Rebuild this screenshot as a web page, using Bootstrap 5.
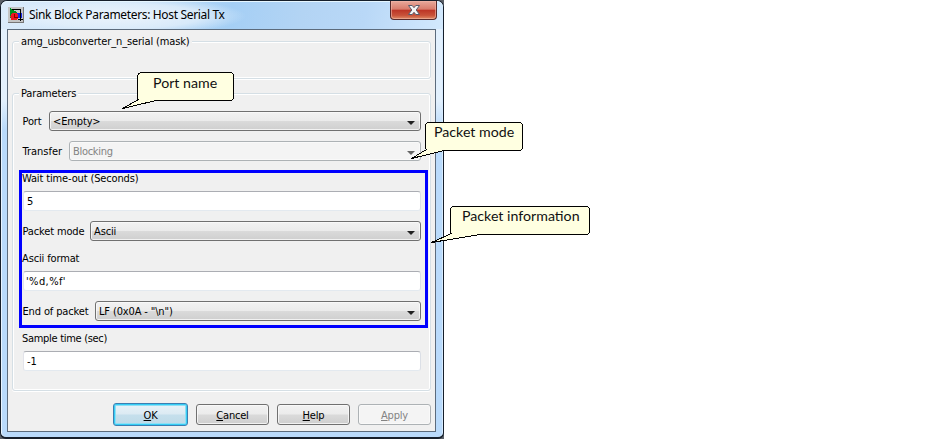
<!DOCTYPE html>
<html lang="en">
<head>
<meta charset="utf-8">
<meta name="viewport" content="width=device-width, initial-scale=1">
<title>Sink Block Parameters: Host Serial Tx</title>
<link href="https://cdn.jsdelivr.net/npm/bootstrap@5.3.0/dist/css/bootstrap.min.css" rel="stylesheet">
<style>
body{width:950px;height:439px;overflow:hidden;background:#fff;color:#000;font:11px/14px "DejaVu Sans Condensed","DejaVu Sans",sans-serif;letter-spacing:-.14px}
.stage{background:#5b6068;width:444px;height:439px}
.window{width:444px;height:439px;padding:0 7px 6px 6px;border:solid #161f2b;border-width:1px 1px 2px 1px;border-radius:7px 7px 6px 6px;background:linear-gradient(#e4f2ff00 0,#e4f2ff00 100px,#b9dafb 129px),#e2f0fd;box-shadow:inset 1px 0 #e8f4ff,inset -1px 0 #d7ebff}
.titlebar{height:28px;margin:0 -7px 0 -6px;padding-left:7px;border-radius:6px 6px 0 0;background:radial-gradient(ellipse 125px 19px at 120px 15px,#eef5fcee 0,#e6f1fbbb 65%,#e6f1fb00 100%),linear-gradient(100deg,#dcecfb 0,#c3dff8 25%,#a5cff5 52%,#b3d4f4 68%,#b9d8f7 82%,#d3e9fd 100%);box-shadow:inset 0 1px #e6f6ff}
.titlebar h1{font:12px/16px "Noto Sans","Open Sans",sans-serif;letter-spacing:-.34px;margin:6px 0 0 5px}
.app-icon{margin-top:6px}
.close-btn{width:47px;height:19px;margin-right:6px;border:1px solid #572a2b;border-top:0;border-radius:0 0 4px 4px;background:linear-gradient(#e8a99b 0,#d87b6b 46%,#bc3425 50%,#c9533a 80%,#e08c66 100%);box-shadow:inset 0 0 0 1px #f2b7a999;padding:0}
.client{height:403px;border:1px solid #5c6b7c;background:#f0f0f0;padding:11px 4px 0 4px}
.group-box{border:1px solid #d5dfe5;border-radius:3px;box-shadow:inset 0 0 0 1px #fff,0 1px #fff}
.mask-box{height:38px;margin-bottom:14px}
.param-box{height:298px;padding:0 9px}
.caption{white-space:pre;height:14px;line-height:16px}
.caption.tight{letter-spacing:-.3px}
.group-title{width:max-content;background:#f0f0f0;padding:0 2px;margin:-8px 0 0 6px}
.param-box .group-title{margin:-8px 0 11px -3px}
.field-row{height:20px;margin-bottom:10px}
.field-row>label{flex:none;white-space:pre;line-height:16px;height:14px;padding-left:.5px}
.w-port{width:27px}.w-transfer{width:47px;letter-spacing:0}.w-mode{width:68px}.w-end{width:73px}
.combo,.entry{height:20px;border-radius:3px;line-height:20px;white-space:pre}
.combo{border:1px solid #707070;background:linear-gradient(#f2f2f2 0,#ebebeb 48%,#dadada 52%,#cfcfcf 100%);box-shadow:inset 0 0 0 1px #fafafacc;padding:0 5px 0 3px}
.combo>span{height:18px}
.combo.off{border-color:#adb2b5;background:#f4f4f4;color:#838383;letter-spacing:-.3px}
.combo svg{margin-top:4px;fill:#222}
.combo.off svg{fill:#666}
.entry{border:1px solid;border-color:#abadb3 #dbdfe6 #e3e9ef #e2e3ea;background:#fff;padding:0 3px;margin:6px 0 10px 1px;width:398px}
.entry.format{letter-spacing:.4px;padding-left:2px}
.packet-info{border:3px solid #00f;width:409px;height:158px;margin:-1px 0 3px -3px;padding:0 4px 0 0;display:flow-root}
.packet-info>.caption:first-child{margin-top:-2px}
.cmd{height:21px;width:73px;border:1px solid #707070;border-radius:3px;letter-spacing:-.2px;line-height:18px;padding:2px 0 0;color:#000;background:linear-gradient(#f2f2f2 0,#ebebeb 48%,#dadada 52%,#cfcfcf 100%);box-shadow:inset 0 0 0 1px #fafafacc}
.cmd.main{width:75px;height:23px;border-color:#3c7fb1;background:linear-gradient(#e9f3f8 0,#dbeaf3 48%,#c5dfec 52%,#bfdae8 100%);box-shadow:inset 0 0 0 1px #35cdf5,inset 0 0 0 2px #8fdff5}
.cmd.off{border-color:#adb2b5;background:#f4f4f4;color:#838383}
.cmd-bar{gap:8px;margin-top:12px}
.callout-note{position:absolute}
.callout-note path{fill:#ffffe1;stroke:#000}
.callout-note span{position:absolute;top:4px;left:33px;white-space:pre;font:14.2px/18px Lato,sans-serif;letter-spacing:0;color:#111}
.note-port{left:120px;top:70px}
.note-mode{left:408px;top:120px}
.note-mode span{left:26px;top:3px}
.note-info{left:429px;top:204px}
.note-info span{top:3px}
</style>
</head>
<body class="position-relative">
<div class="stage">
<main class="window">
  <header class="titlebar d-flex align-items-start">
    <svg class="app-icon" width="16" height="16" viewBox="0 0 16 16" aria-hidden="true" shape-rendering="crispEdges">
      <path fill="#c5c5c5" d="M0 0h16v16H0z"/><path fill="none" stroke="#777" d="M0 15.500h15.500V0"/>
      <path fill="#008f20" d="M2 1l8 5-8 5z"/><path fill="#1526ee" d="M8 6h6v5H8z"/>
      <path fill="none" stroke="#000" d="M4 2.500h8.500V14M10 12.500h5"/>
      <circle cx="6.500" cy="9.500" r="4" fill="#f01420"/><path stroke="#800" d="M6.500 7v3h3" fill="none"/>
    </svg>
    <h1 class="text-nowrap">Sink Block Parameters: Host Serial Tx</h1>
    <button class="close-btn ms-auto d-flex justify-content-center align-items-center" aria-label="Close">
      <svg width="14" height="12" viewBox="0 0 14 12"><path d="M1.500 1.500h3.700L7 3.700l1.800-2.200h3.700L9.200 6l3.300 4.500H8.800L7 8.300l-1.800 2.200H1.500L4.800 6z" fill="#f6f6f6" stroke="#575b6b"/></svg>
    </button>
  </header>
  <section class="client">
    <div class="group-box mask-box"><div class="group-title caption">amg_usbconverter_n_serial (mask)</div></div>
    <div class="group-box param-box">
      <div class="group-title caption">Parameters</div>
      <div class="field-row d-flex align-items-center"><label class="w-port">Port</label><div class="combo flex-fill d-flex justify-content-between align-items-center"><span>&lt;Empty&gt;</span><svg width="8" height="4"><path d="M0 0h8L4 4z"/></svg></div></div>
      <div class="field-row d-flex align-items-center"><label class="w-transfer">Transfer</label><div class="combo off flex-fill d-flex justify-content-between align-items-center"><span>Blocking</span><svg width="8" height="4"><path d="M0 0h8L4 4z"/></svg></div></div>
      <div class="packet-info">
        <div class="caption">Wait time-out (Seconds)</div>
        <div class="entry">5</div>
        <div class="field-row d-flex align-items-center"><label class="w-mode">Packet mode</label><div class="combo flex-fill d-flex justify-content-between align-items-center"><span>Ascii</span><svg width="8" height="4"><path d="M0 0h8L4 4z"/></svg></div></div>
        <div class="caption">Ascii format</div>
        <div class="entry format">'%d,%f'</div>
        <div class="field-row d-flex align-items-center"><label class="w-end">End of packet</label><div class="combo flex-fill d-flex justify-content-between align-items-center"><span>LF (0x0A - "\n")</span><svg width="8" height="4"><path d="M0 0h8L4 4z"/></svg></div></div>
      </div>
      <div class="caption tight">Sample time (sec)</div>
      <div class="entry">-1</div>
    </div>
    <div class="cmd-bar d-flex justify-content-end align-items-center">
      <button class="cmd main"><u>O</u>K</button><button class="cmd"><u>C</u>ancel</button><button class="cmd"><u>H</u>elp</button><button class="cmd off"><u>A</u>pply</button>
    </div>
  </section>
</main>
</div>
<div class="callout-note note-port"><svg class="d-block" width="116" height="42" shape-rendering="crispEdges"><path d="M17.500 6q0-2 3-3.500h89q4 0 4 3.500v21q0 3.500-4 3.500H36L2.500 38.500l16-9-1-1.500z"/></svg><span>Port name</span></div>
<div class="callout-note note-mode"><svg class="d-block" width="118" height="42" shape-rendering="crispEdges"><path d="M17.500 6q0-3.500 4-3.500h89q4 0 4 3.500v21q0 3.500-4 3.500H36L3.500 38.500l15-9-1-1.500z"/></svg><span>Packet mode</span></div>
<div class="callout-note note-info"><svg class="d-block" width="164" height="42" shape-rendering="crispEdges"><path d="M21.500 6q0-3.500 4-3.500h131q4 0 4 3.500v21q0 3.500-4 3.500H51L2.500 38.500l20-9-1-1.500z"/></svg><span>Packet information</span></div>
<script src="https://cdn.jsdelivr.net/npm/bootstrap@5.3.0/dist/js/bootstrap.bundle.min.js"></script>
</body>
</html>
